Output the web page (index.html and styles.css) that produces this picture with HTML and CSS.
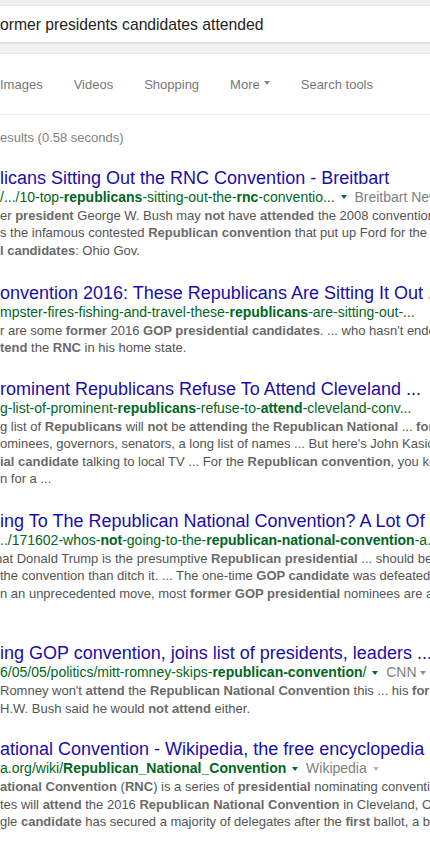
FILE: index.html
```html
<!DOCTYPE html>
<html lang="en">
<head>
<meta charset="utf-8">
<title>former presidents candidates attended - Google Search</title>
<link rel="stylesheet" href="styles.css">
</head>
<body>
<header class="top">
  <div class="searchbox">ormer presidents candidates attended</div>
</header>
<nav class="tabs">
  <span class="tab">Images</span>
  <span class="tab">Videos</span>
  <span class="tab">Shopping</span>
  <span class="tab">More <i class="caret gray"></i></span>
  <span class="tab">Search tools</span>
</nav>
<div class="stats">esults (0.58 seconds)</div>
<main class="results">
  <div class="result">
    <div class="title">licans Sitting Out the RNC Convention - Breitbart</div>
    <div class="url">/.../10-top-<b>republicans</b>-sitting-out-the-<b>rnc</b>-conventio... <i class="caret green"></i> <span class="src">Breitbart News Network</span></div>
    <div class="snip">er <b>president</b> George W. Bush may <b>not</b> have <b>attended</b> the 2008 convention, and</div>
    <div class="snip">s the infamous contested <b>Republican convention</b> that put up Ford for the ... </div>
    <div class="snip"><b>l candidates</b>: Ohio Gov.</div>
  </div>
  <div class="result short">
    <div class="title">onvention 2016: These Republicans Are Sitting It Out ...</div>
    <div class="url">mpster-fires-fishing-and-travel-these-<b>republicans</b>-are-sitting-out-...</div>
    <div class="snip">r are some <b>former</b> 2016 <b>GOP presidential candidates</b>. ... who hasn't endorsed</div>
    <div class="snip"><b>tend</b> the <b>RNC</b> in his home state.</div>
  </div>
  <div class="result">
    <div class="title">rominent Republicans Refuse To Attend Cleveland ...</div>
    <div class="url">g-list-of-prominent-<b>republicans</b>-refuse-to-<b>attend</b>-cleveland-conv...</div>
    <div class="snip">g list of <b>Republicans</b> will <b>not</b> be <b>attending</b> the <b>Republican National</b> ... <b>former</b></div>
    <div class="snip">ominees, governors, senators, a long list of names ... But here's John Kasich</div>
    <div class="snip"><b>ial candidate</b> talking to local TV ... For the <b>Republican convention</b>, you know</div>
    <div class="snip">n for a ...</div>
  </div>
  <div class="result">
    <div class="title">ing To The Republican National Convention? A Lot Of ...</div>
    <div class="url">../171602-whos-<b>not</b>-going-to-the-<b>republican-national-convention</b>-a...</div>
    <div class="snip cut">hat Donald Trump is the presumptive <b>Republican presidential</b> ... should be</div>
    <div class="snip">the convention than ditch it. ... The one-time <b>GOP candidate</b> was defeated</div>
    <div class="snip">n an unprecedented move, most <b>former GOP presidential</b> nominees are all</div>
    <div class="snip">&nbsp;</div>
  </div>
  <div class="result short">
    <div class="title">ing GOP convention, joins list of presidents, leaders ...</div>
    <div class="url">6/05/05/politics/mitt-romney-skips-<b>republican-convention</b>/ <i class="caret green"></i> <span class="src">CNN</span> <i class="caret gray"></i></div>
    <div class="snip">Romney won't <b>attend</b> the <b>Republican National Convention</b> this ... his <b>former</b></div>
    <div class="snip">H.W. Bush said he would <b>not attend</b> either.</div>
  </div>
  <div class="result">
    <div class="title">ational Convention - Wikipedia, the free encyclopedia</div>
    <div class="url">a.org/wiki/<b>Republican_National_Convention</b> <i class="caret green"></i> <span class="src">Wikipedia</span> <i class="caret light"></i></div>
    <div class="snip"><b>ational Convention</b> (<b>RNC</b>) is a series of <b>presidential</b> nominating conventions</div>
    <div class="snip">tes will <b>attend</b> the 2016 <b>Republican National Convention</b> in Cleveland, Ohio</div>
    <div class="snip">gle <b>candidate</b> has secured a majority of delegates after the <b>first</b> ballot, a brokered</div>
  </div>
</main>
</body>
</html>
```
FILE: styles.css
```css
html, body {
  margin: 0;
  padding: 0;
  background: #fff;
  overflow: hidden;
}
body {
  font-family: "Liberation Sans", Arial, sans-serif;
  width: 430px;
  height: 860px;
}
.top {
  background: #f1f1f1;
  padding: 5px 0 9px;
  border-bottom: 1px solid #e8e8e8;
}
.searchbox {
  background: #fff;
  border-top: 1px solid #e2e2e2;
  border-bottom: 2px solid #e2e2e2;
  height: 36px;
  line-height: 38px;
  font-size: 15.7px;
  color: #222;
  white-space: nowrap;
}
.tabs {
  display: flex;
  gap: 31px;
  height: 60px;
  align-items: center;
  border-bottom: 1px solid #ebebeb;
  font-size: 13px;
  color: #777;
  white-space: nowrap;
}
.tab {
  display: inline-flex;
  align-items: center;
  gap: 4px;
}
.caret {
  display: inline-block;
  width: 0;
  height: 0;
  border-left: 3px solid transparent;
  border-right: 3px solid transparent;
  border-top: 4px solid #777;
  vertical-align: middle;
  margin-top: -2px;
}
.caret.green { border-top-color: #006621; margin: -2px 4px 0 2px; }
.caret.gray { border-top-color: #8a8a8a; }
.caret.light { border-top-color: #b8b8b8; margin-left: 2px; }
.stats {
  font-size: 13px;
  color: #808080;
  line-height: 16px;
  padding-top: 15px;
  white-space: nowrap;
}
.results {
  padding-top: 22px;
}
.result {
  margin-bottom: 24px;
  white-space: nowrap;
}
.result.short {
  margin-bottom: 22.5px;
}
.title {
  font-size: 18px;
  line-height: 20px;
  color: #1a0dab;
}
.url {
  font-size: 14px;
  line-height: 19px;
  color: #006621;
}
.src { color: #808080; }
.snip {
  font-size: 13px;
  line-height: 17.3px;
  color: #545454;
}
.snip b { color: #6a6a6a; }
.cut { margin-left: -5px; }
```
